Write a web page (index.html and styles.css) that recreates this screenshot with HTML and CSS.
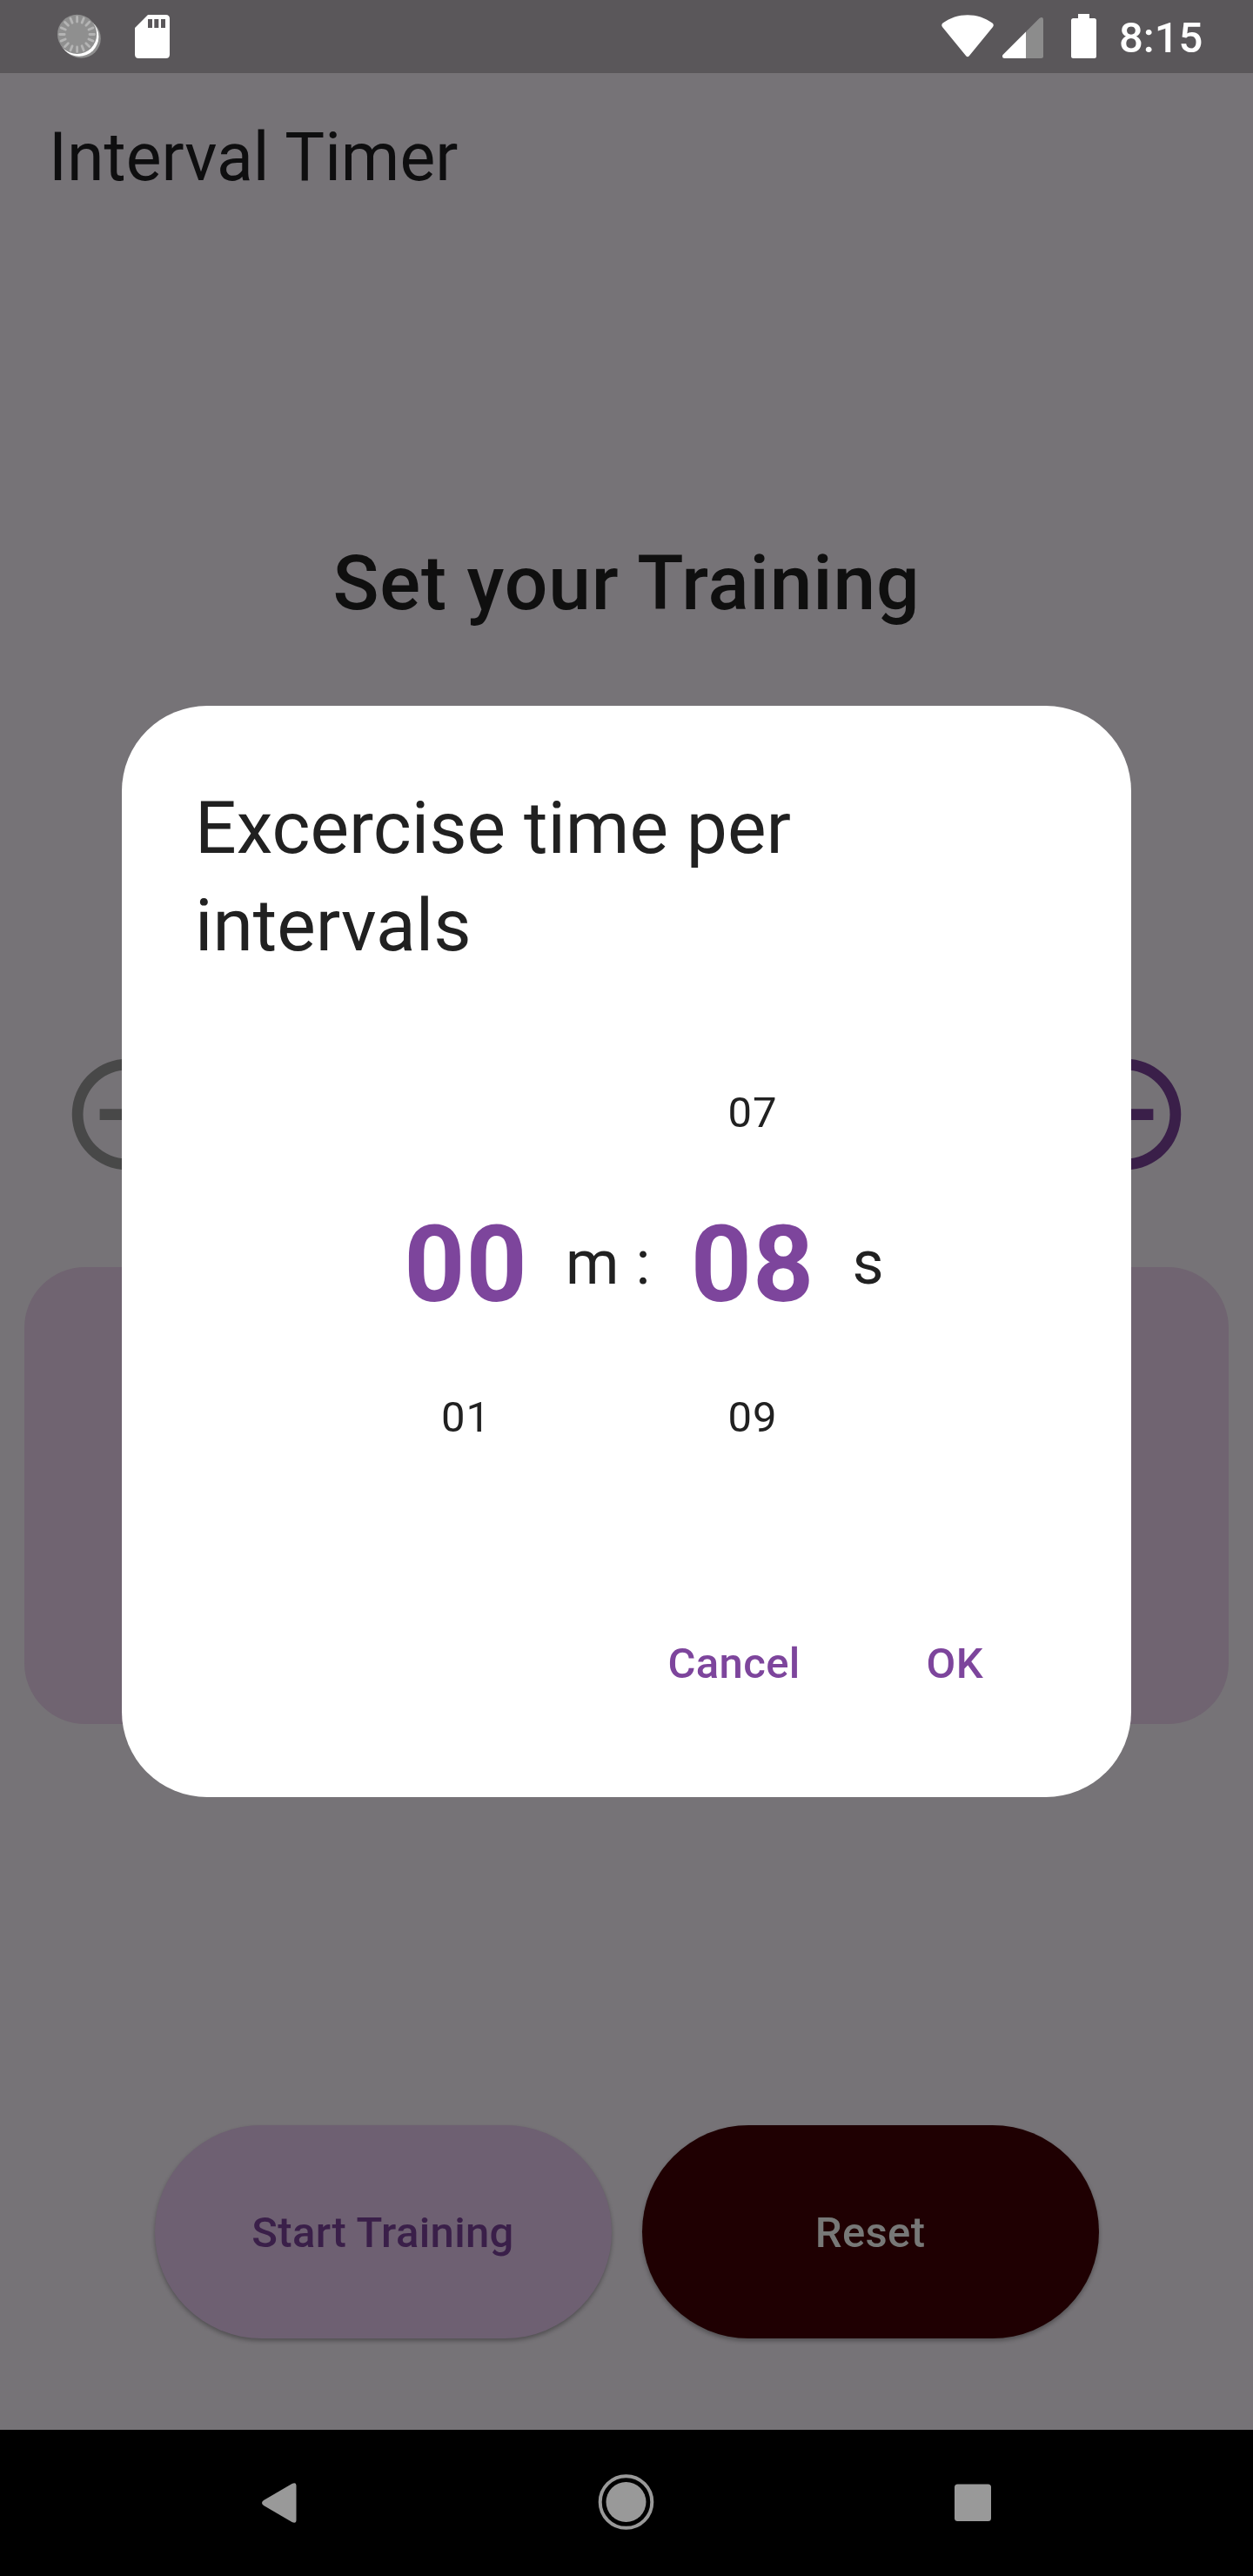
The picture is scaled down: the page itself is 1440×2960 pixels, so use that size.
FILE: index.html
```html
<!DOCTYPE html>
<html lang="en">
<head>
<meta charset="utf-8">
<title>Interval Timer</title>
<link rel="stylesheet" href="styles.css">
</head>
<body>
<div class="screen">
  <div class="status-bar">
    <svg class="status-icons" width="240" height="84" viewBox="0 0 240 84">
      <circle cx="93.2" cy="44.2" r="22.6" fill="#8f8f8f"/>
      <circle cx="90.8" cy="42.2" r="22.6" fill="#fff"/>
      <circle cx="88.6" cy="39.4" r="22.6" fill="#8f8f8f"/>
      <g stroke="#b4b4b4" stroke-width="2.8" stroke-linecap="round">
        <path d="M88.6 19.5v5.5M88.6 54v5.5M68.7 39.5h5.5M103 39.5h5.5"/>
        <path d="M88.6 19.5v5.5M88.6 54v5.5M68.7 39.5h5.5M103 39.5h5.5" transform="rotate(22.5 88.6 39.5)"/>
        <path d="M88.6 19.5v5.5M88.6 54v5.5M68.7 39.5h5.5M103 39.5h5.5" transform="rotate(45 88.6 39.5)"/>
        <path d="M88.6 19.5v5.5M88.6 54v5.5M68.7 39.5h5.5M103 39.5h5.5" transform="rotate(67.5 88.6 39.5)"/>
      </g>
      <path fill="#fff" fill-rule="evenodd" d="M170 17H190.500Q195 17 195 21.500V62.500Q195 67 190.500 67H159.500Q155 67 155 62.500V32ZM170 22V32H175V22ZM177.300 22V32H182.300V22ZM185 22V32H190V22Z"/>
    </svg>
    <div class="status-right">
      <svg width="180" height="84" viewBox="1081 0 180 84">
        <path fill="#fff" d="M1083 31Q1081.300 28.500 1083.500 26.500C1100 14 1124 14 1140.500 26.500Q1142.800 28.500 1141 31L1114 64Q1112 66.500 1110 64Z"/>
        <path fill="#8c8c8c" d="M1179 36.500L1194.500 21Q1199 18.500 1199 23V64.500Q1199 67 1196.500 67H1179Z"/>
        <path fill="#fff" d="M1179 36.500V67H1154.500Q1152 67 1152 64.500V63.500Z"/>
        <path fill="#fff" d="M1239 16H1252V21H1257.500Q1260 21 1260 23.500V64.500Q1260 67 1257.500 67H1233.500Q1231 67 1231 64.500V23.500Q1231 21 1233.500 21H1239Z"/>
      </svg>
      <span class="clock">8:15</span>
    </div>
  </div>
  <header class="app-bar">Interval Timer</header>
  <main class="content">
    <h1 class="heading">Set your Training</h1>
    <div class="counter">
      <svg class="step step-off" viewBox="0 0 24 24"><path d="M7 11v2h10v-2H7zm5-9C6.480 2 2 6.480 2 12s4.480 10 10 10 10-4.480 10-10S17.520 2 12 2zm0 18c-4.410 0-8-3.590-8-8s3.590-8 8-8 8 3.590 8 8-3.590 8-8 8z"/></svg>
      <svg class="step step-on" viewBox="0 0 24 24"><path d="M13 7h-2v4H7v2h4v4h2v-4h4v-2h-4V7zm-1-5C6.480 2 2 6.480 2 12s4.480 10 10 10 10-4.480 10-10S17.520 2 12 2zm0 18c-4.410 0-8-3.590-8-8s3.590-8 8-8 8 3.590 8 8-3.590 8-8 8z"/></svg>
    </div>
    <div class="card"></div>
    <div class="buttons">
      <div class="btn btn-start">Start Training</div>
      <div class="btn btn-reset">Reset</div>
    </div>
  </main>
  <nav class="nav-bar">
    <svg width="1440" height="168" viewBox="0 2792 1440 168" fill="#999">
      <path d="M303 2873L335.500 2854Q340.500 2851.500 340.500 2856.500V2895.500Q340.500 2900.500 335.500 2898L303 2879Q299 2876 303 2873Z"/>
      <circle cx="719.500" cy="2875" r="23"/>
      <circle cx="719.500" cy="2875" r="29.800" fill="none" stroke="#999" stroke-width="4"/>
      <rect x="1097" y="2854.500" width="42" height="42.500" rx="3.500"/>
    </svg>
  </nav>
  <div class="dialog">
    <h2 class="dialog-title">Excercise time per intervals</h2>
    <div class="picker">
      <div class="wheel"><span class="item"></span><span class="item current">00</span><span class="item">01</span></div>
      <div class="unit">m :</div>
      <div class="wheel"><span class="item">07</span><span class="item current">08</span><span class="item">09</span></div>
      <div class="unit">s</div>
    </div>
    <div class="actions"><span class="action">Cancel</span><span class="action">OK</span></div>
  </div>
</div>
</body>
</html>
```
FILE: styles.css
```css
* { box-sizing: border-box; }
body { margin: 0; font-family: Roboto, sans-serif; }
.screen {
  position: relative;
  display: flex;
  flex-direction: column;
  width: 1440px;
  height: 2960px;
  overflow: hidden;
  background: #767377;
}
.status-bar {
  display: flex;
  justify-content: space-between;
  height: 84px;
  background: #5a575a;
}
.status-right { display: flex; padding-right: 56px; }
.clock {
  width: 98px;
  margin-left: 25px;
  font-size: 49px;
  font-weight: 500;
  line-height: 88px;
  color: #fff;
  white-space: nowrap;
}
.app-bar {
  height: 194px;
  padding-left: 56px;
  font-size: 77px;
  line-height: 194px;
  color: #0e0e0f;
}
.content { display: flex; flex-direction: column; flex: 1; }
.heading {
  margin: 342px 0 0;
  font-size: 87.5px;
  font-weight: 500;
  letter-spacing: 0.875px;
  line-height: 100px;
  text-align: center;
  color: #0f0f0f;
}
.counter {
  display: flex;
  justify-content: space-between;
  margin-top: 484.2px;
  padding: 0 70.3px;
}
.step { width: 153px; height: 153px; }
.step-off { fill: #484848; }
.step-on { fill: #3a1f49; }
.card {
  height: 525px;
  margin: 98.4px 28px 0;
  border-radius: 70px;
  background: #706471;
}
.buttons {
  display: flex;
  justify-content: center;
  gap: 35px;
  margin-top: 461.4px;
}
.btn {
  width: 525px;
  height: 245px;
  border-radius: 123px;
  font-size: 49px;
  font-weight: 500;
  letter-spacing: 0.35px;
  line-height: 247px;
  text-align: center;
  box-shadow: 0 3px 5px rgba(0, 0, 0, 0.3);
}
.btn-start { background: #6e6072; color: #3a1f49; }
.btn-reset { background: #1f0002; color: #777877; }
.nav-bar { height: 168px; background: #000; }
.nav-bar svg { display: block; }
.dialog {
  position: absolute;
  left: 140px;
  top: 811.4px;
  width: 1160px;
  height: 1253.2px;
  padding: 85px 84px 84px;
  border-radius: 98px;
  background: #fff;
  color: #212121;
}
.dialog-title {
  margin: 0;
  font-size: 84px;
  font-weight: 400;
  line-height: 112px;
}
.picker {
  display: grid;
  grid-template-columns: 175px 154.500px 175px 100px;
  margin-top: 71px;
  padding-left: 224px;
  letter-spacing: 0.875px;
}
.wheel { display: flex; flex-direction: column; }
.item {
  height: 175px;
  font-size: 49px;
  line-height: 175px;
  text-align: center;
}
.current { font-size: 122.5px; font-weight: 700; color: #7d459c; }
.unit {
  padding-left: 27px;
  font-size: 70px;
  line-height: 521px;
  white-space: nowrap;
}
.actions {
  display: flex;
  justify-content: flex-end;
  gap: 145px;
  margin-top: 167px;
  padding-right: 86px;
}
.action {
  font-size: 49px;
  font-weight: 500;
  letter-spacing: 0.35px;
  line-height: 57px;
  color: #7d459c;
}
```
